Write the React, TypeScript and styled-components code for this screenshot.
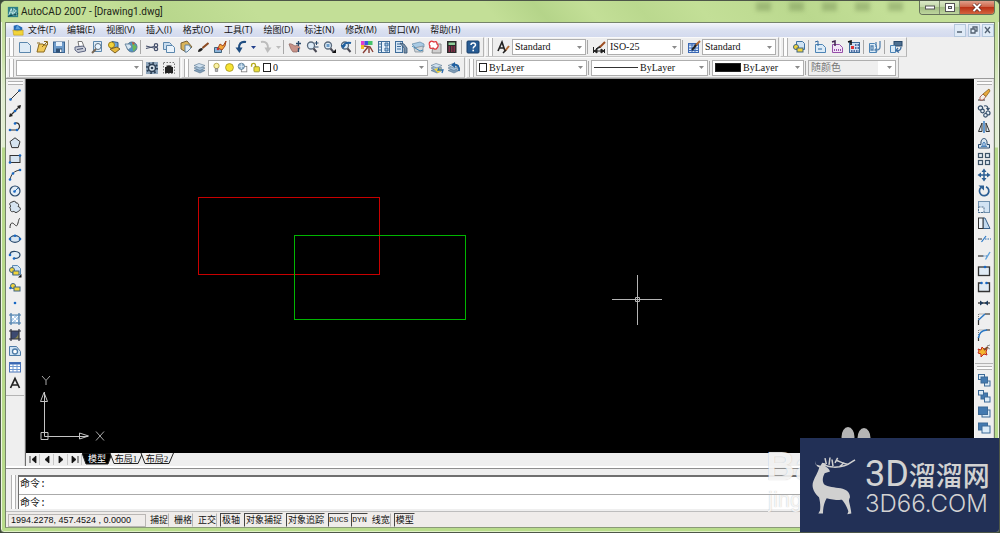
import React from "react";
import styled, { createGlobalStyle, css } from "styled-components";

const ui = `"Open Sans", "Noto Sans CJK SC", sans-serif`;
const song = `"Liberation Serif", "Noto Sans CJK SC", serif`;
const mono = `"Liberation Mono", "Noto Sans CJK SC", monospace`;

const Global = createGlobalStyle`
  * { box-sizing: border-box; }
  body { margin: 0; background: #3c4a38; font-family: ${ui}; color: #111; }
  button, input, select { font: inherit; color: inherit; margin: 0; padding: 0; border: 0; background: none; border-radius: 0; }
  svg { display: block; flex: none; }
`;

/* ---------- window frame ---------- */

const Frame = styled.div`
  position: relative;
  display: flex;
  flex-direction: column;
  min-height: 100vh;
  overflow: hidden;
  border: 1px solid #4d5648;
  border-radius: 6px 6px 4px 4px;
  padding: 0 5px 4px 5px;
  background: linear-gradient(#c3de99 0, #c9e2a4 50px, #e0ecd0 90px, #e2eed3 146px, #b7d98b 147px, #b9dc8c 100%);
  box-shadow: inset 1px 0 0 #eef6e2, inset -1px 0 0 #eef6e2, inset 0 -1px 0 #dff0c4;
`;

const TitleBar = styled.header`
  display: flex;
  align-items: flex-start;
  height: 21px;
  margin: 0 -5px;
  padding-left: 6px;
  background:
    linear-gradient(50deg, transparent 12%, #a9cb7d66 17%, transparent 26%, transparent 49%, #9fc47566 54%, transparent 59%, #a9cb7d55 64%, transparent 70%, #a9cb7d55 80%, transparent 88%),
    #c3df97;
`;

const Title = styled.h1`
  flex: 1;
  display: flex;
  align-items: center;
  gap: 2px;
  height: 21px;
  margin: 0;
  font: 400 10px/20px Roboto, ${ui};
  color: #1c2416;
`;

const Ghosts = styled.div`
  display: flex;
  gap: 18px;
  padding: 1px 16px 0 0;
  filter: blur(2px);
`;
const Ghost = styled.i`
  width: 15px;
  height: 9px;
  background: #5d764055;
`;

const CaptionGroup = styled.div`
  display: flex;
  margin-right: 4px;
  height: 14px;
  border: 1px solid #66725a;
  border-top: 0;
  border-radius: 0 0 4px 4px;
  overflow: hidden;
`;
const CaptionButton = styled.button<{ $close?: boolean }>`
  display: grid;
  place-items: center;
  width: ${(p) => (p.$close ? 34 : 20)}px;
  border-right: 1px solid #7f8c70;
  background: linear-gradient(#dbe9c8, #c3d8a8 45%, #a3bd84 50%, #bdd59d);
  ${(p) =>
    p.$close &&
    css`
      border-right: 0;
      background: linear-gradient(#e0a08c, #cf6448 45%, #bb3317 50%, #d3653f);
    `}
`;

const Client = styled.div`
  flex: 1;
  display: flex;
  flex-direction: column;
  border: 1px solid #75836a;
  border-bottom-color: #8a9a78;
  margin: 0 -1px;
  background: #efefef;
`;

const MenuBar = styled.nav`
  display: flex;
  align-items: center;
  height: 14px;
  padding-left: 6px;
  background: linear-gradient(#f4f6fb, #dbe1f1 50%, #d3daee);
`;
const MenuItems = styled.div`
  flex: 1;
  display: flex;
  gap: 11px;
  padding-left: 4px;
`;
const MenuButton = styled.button`
  font: 9px/14px ${ui};
  white-space: nowrap;
`;
const MdiButtons = styled.div`
  display: flex;
  gap: 2px;
`;
const MdiButton = styled.button`
  display: grid;
  place-items: center;
  width: 12px;
  height: 13px;
  border: 1px solid #b4c7dc;
  background: #e0ebf7;
`;

/* ---------- toolbars ---------- */

const ToolRow = styled.div<{ $h: number }>`
  display: flex;
  height: ${(p) => p.$h}px;
`;
const Bar = styled.div`
  display: flex;
  align-items: center;
  padding: 0 2px;
  border: 1px solid #fafafa;
  border-width: 1px 0 0 1px;
  border-right: 1px solid #b4b4b4;
  border-bottom: 1px solid #c4c4c4;
  margin-right: 1px;
`;
const Grip = styled.i<{ $across?: boolean }>`
  flex: none;
  ${(p) =>
    p.$across
      ? css`
          width: 15px;
          height: 4px;
          margin: 2px 0;
          border-width: 1px 0;
        `
      : css`
          width: 5px;
          height: 18px;
          margin-right: 2px;
          border-width: 0 1px;
        `}
  border-style: solid;
  border-color: #b2b2b2;
  background: #fdfdfd;
`;
const Split = styled.i`
  flex: none;
  width: 1px;
  height: 14px;
  margin: 0 2px 0 1px;
  background: #a8a8a8;
`;
const ToolButton = styled.button<{ $w?: number; $h?: number }>`
  flex: none;
  display: grid;
  place-items: center;
  width: ${(p) => p.$w ?? 17}px;
  height: ${(p) => p.$h ?? 17}px;
`;
const Combo = styled.label<{ $w: number; $dim?: boolean }>`
  display: flex;
  align-items: center;
  gap: 2px;
  width: ${(p) => p.$w}px;
  height: 16px;
  padding: 0 3px 0 2px;
  border: 1px solid #aeaeae;
  background: ${(p) => (p.$dim ? "linear-gradient(90deg, #efefef 80%, #fff 80%)" : "#fff")};
  color: ${(p) => (p.$dim ? "#777" : "#111")};
  select {
    flex: 1;
    min-width: 0;
    height: 14px;
    appearance: none;
    outline: 0;
    font: 10px/14px ${song};
    opacity: 1;
  }
`;
const Swatch = styled.i<{ $w: number; $fill: string }>`
  flex: none;
  width: ${(p) => p.$w}px;
  height: 9px;
  border: 1px solid #222;
  background: ${(p) => p.$fill};
`;
const LineSample = styled.i`
  flex: none;
  width: 44px;
  height: 1px;
  background: #333;
`;

/* ---------- drawing area ---------- */

const Workspace = styled.main`
  flex: 1;
  display: flex;
  border-top: 1px solid #9a9a9a;
`;
const SideDock = styled.aside`
  flex: none;
  display: flex;
  flex-direction: column;
  width: 19px;
  border-right: 1px solid #d8d8d8;
`;
const SideBar = styled.div`
  display: flex;
  flex-direction: column;
  align-items: center;
  padding-bottom: 4px;
  border-bottom: 1px solid #b4b4b4;
`;
const Center = styled.section`
  flex: 1;
  min-width: 0;
  display: flex;
  flex-direction: column;
  border-left: 1px solid #6e6e6e;
  border-right: 1px solid #f8f8f8;
`;
const Canvas = styled.div`
  position: relative;
  flex: 1;
  background: #000;
  overflow: hidden;
`;
const Model = styled.svg`
  position: absolute;
  left: 0;
  top: 0;
`;
const Ucs = styled.svg`
  position: absolute;
  left: 11px;
  bottom: 8px;
`;
const LayoutTabs = styled.div`
  display: flex;
  align-items: center;
  height: 12px;
  margin-bottom: 3px;
`;
const TabNav = styled.button`
  display: grid;
  place-items: center;
  width: 14px;
  height: 11px;
  border-right: 1px solid #c8c8c8;
`;
const Tab = styled.button<{ $on?: boolean }>`
  position: relative;
  margin-left: ${(p) => (p.$on ? 0 : -3)}px;
  width: ${(p) => (p.$on ? 30 : 34)}px;
  height: 12px;
  svg {
    position: absolute;
    inset: 0;
  }
  span {
    position: relative;
    display: block;
    font: 9px/12px ${song};
    color: ${(p) => (p.$on ? "#fff" : "#111")};
    white-space: nowrap;
  }
`;

/* ---------- command line and status bar ---------- */

const CommandDock = styled.section`
  display: flex;
  border-top: 1px solid #8e8e8e;
  padding: 6px 0 2px 5px;
  box-shadow: 0 -2px 0 #fff;
`;
const CommandBox = styled.div`
  flex: 1;
  border: 1px solid #6f6f6f;
  border-width: 2px 0 0 1px;
  background: #fff;
  font: 10px/17px ${mono};
`;
const CommandGrip = styled.i`
  width: 5px;
  margin: 0 2px 0 0;
  border: solid #b2b2b2;
  border-width: 0 1px;
  background: #fdfdfd;
`;
const History = styled.div`
  height: 17px;
  padding-left: 1px;
  line-height: 15px;
`;
const Prompt = styled.label`
  display: flex;
  height: 15px;
  padding-left: 1px;
  border-top: 1px solid #aaa;
  line-height: 17px;
  input {
    flex: 1;
    outline: 0;
  }
`;
const StatusBar = styled.footer`
  display: flex;
  align-items: center;
  height: 16px;
  padding: 1px 2px 0 2px;
  border-top: 1px solid #bdbdbd;
  background: #efecea;
`;
const Coordinates = styled.output`
  width: 138px;
  height: 13px;
  margin-right: 2px;
  padding-left: 2px;
  border: 1px solid #b9b6b4;
  font: 9px/11px "Liberation Sans", sans-serif;
  white-space: pre;
`;
const Toggle = styled.button<{ $down?: boolean; $code?: boolean }>`
  height: 14px;
  margin-right: ${(p) => (p.$code ? 2 : 3)}px;
  padding: 0 0 0 ${(p) => (p.$code ? 0 : 1)}px;
  border: 1px solid;
  border-color: ${(p) => (p.$down ? "#444 #efecea #efecea #444" : "#efecea #b9b6b4 #efecea #efecea")};
  font: ${(p) => (p.$code ? `8px/12px ${mono}` : `9px/12px ${song}`)};
  white-space: nowrap;
`;

/* ---------- overlays ---------- */

const Paw = styled.svg`
  position: absolute;
  right: 125px;
  bottom: 86px;
`;
const BaiduMark = styled.div`
  position: absolute;
  right: 199px;
  bottom: 18px;
  width: 32px;
  font-family: "Liberation Sans", sans-serif;
  color: #ffffffd0;
  text-shadow: 0 0 1px #8888;
  pointer-events: none;
  white-space: nowrap;
  overflow: hidden;
  b {
    display: block;
    font-size: 40px;
    line-height: 40px;
    margin-left: -2px;
  }
  span {
    display: block;
    font-size: 22px;
    line-height: 28px;
  }
`;
const SiteBadge = styled.div`
  position: absolute;
  right: -1px;
  bottom: -1px;
  display: flex;
  align-items: center;
  gap: 8px;
  width: 200px;
  height: 95px;
  padding-left: 12px;
  background: #223056;
  color: #d2d2d2;
`;
const BadgeText = styled.div`
  display: flex;
  flex-direction: column;
  padding-top: 3px;
`;
const BadgeName = styled.strong`
  display: flex;
  align-items: center;
  height: 33px;
  font: 400 36px/33px Roboto, sans-serif;
  white-space: nowrap;
  span {
    font: 500 27px/33px "Noto Sans CJK SC", sans-serif;
  }
`;
const BadgeUrl = styled.span`
  font: 300 24px/26px Inter, sans-serif;
  white-space: nowrap;
`;

/* ---------- icons, each in a 14-unit box ---------- */

const B = "#2b6cb0";
const D = "#2a4a6c";
const K = "#333";
const Y = "#f2d43a";

const lens = (
  <>
    <circle cx="6" cy="5.5" r="3.5" fill="#dcebf7" stroke="#5a6a7c" strokeWidth="1.3" />
    <path d="M8.5 8.5l3 3.5" stroke="#4a4a55" strokeWidth="2" />
  </>
);
const layers = (
  <>
    <path d="M1 9.500l5-2 6 2-5 2.500z" fill="#7f9db8" stroke="#55738f" strokeWidth=".6" />
    <path d="M1 7l5-2 6 2-5 2.500z" fill="#a9c3da" stroke="#55738f" strokeWidth=".6" />
    <path d="M1 4.500l5-2 6 2-5 2.500z" fill="#cfe0ee" stroke="#55738f" strokeWidth=".6" />
  </>
);
const dot = (x: number, y: number) => <circle cx={x} cy={y} r="1.3" fill="#1768c4" />;
const blockShapes = (x: number, y: number) => (
  <g transform={`translate(${x} ${y})`}>
    <circle cx="3" cy="3" r="2.500" fill={Y} stroke="#3f6480" />
    <rect x="4" y="4" width="6" height="4" fill={Y} stroke="#3f6480" />
  </g>
);

const art: Record<string, React.ReactNode> = {
  app: (
    <>
      <rect x="1" y="1" width="12" height="12" fill="#2d7f86" />
      <path d="M2 11L5 3l2 8M3 8h3M8 3v8M8 3l3 3-3 2M11 11V8" stroke="#d7f4f2" fill="none" />
      <path d="M1 12l12-3" stroke="#0d3e48" />
    </>
  ),
  dwg: (
    <>
      <path d="M2 2l4-1 6 3v4H2z" fill="#2268b4" />
      <path d="M6 1l4 5H4z" fill="#5ca0dc" />
      <path d="M1 7l5 1 7-1v6H2z" fill={Y} stroke="#b38f1a" strokeWidth=".6" />
    </>
  ),
  new: <path d="M1.500 2.500h8l3 3v7h-11z" fill="#deebf6" stroke="#5b87ad" />,
  open: (
    <>
      <path d="M2 12l2-8h4l1 1h3l-3 7z" fill="#f0c95a" stroke="#8a6a20" />
      <path d="M7 7l5-5M9 1.500h3.500V5M2 3h3" stroke="#8a6a20" fill="none" />
    </>
  ),
  save: (
    <>
      <rect x="1.500" y="2" width="11" height="10.500" fill="#6f9ccb" stroke="#3c6591" />
      <rect x="4" y="2" width="6" height="4" fill="#e6f0fa" />
      <rect x="4" y="8.500" width="6" height="4" fill="#2f5075" />
      <rect x="8" y="9.500" width="1.500" height="2.500" fill="#fff" />
    </>
  ),
  print: (
    <>
      <path d="M5 1.500h4l2 5H6z" fill="#fff" stroke="#777" />
      <path d="M2 7l8-1 2.500 2v3L5 12.500 2 10z" fill="#c9cdd8" stroke="#5c6480" />
      <path d="M4 9.500l6-1" stroke="#465070" />
    </>
  ),
  preview: (
    <>
      <path d="M3.500 1.500h8v10h-8z" fill="#deebf6" stroke="#5b87ad" />
      <circle cx="8" cy="6.500" r="3" fill="#eaf5ff" stroke="#5a7085" />
      <path d="M6 9l-4 4" stroke="#765" strokeWidth="2" />
    </>
  ),
  publish: (
    <>
      <path d="M5 1.500l6 1v5l-6 1z" fill="#6ca3d4" stroke="#385f85" />
      <circle cx="4.500" cy="5" r="3" fill={Y} stroke="#9a7a18" />
      <path d="M3 9l7-2 3 2-5 4z" fill="#e6b83d" stroke="#7a6124" />
    </>
  ),
  globe: (
    <>
      <circle cx="8" cy="7" r="5" fill="#4e93c9" stroke="#5a7990" />
      <path d="M8 3c3 0 3 3 5 4-2 2-2 4-4 4z" fill="#6cb858" />
      <path d="M1 4h5l2 3-4 3z" fill="#d7e6f2" stroke="#6b87a0" />
      <path d="M8 2l3 1-2 2z" fill="#d05038" />
    </>
  ),
  cut: (
    <g fill="none" stroke="#45506b" strokeWidth="1.200">
      <path d="M1 6l8 2M1 8.500l8-2" />
      <circle cx="11" cy="5.300" r="1.700" />
      <circle cx="11" cy="9" r="1.700" />
    </g>
  ),
  copyclip: (
    <>
      <path d="M1.500 2.500h6l2 2v5h-8z" fill="#c8dcee" stroke="#5b87ad" />
      <path d="M4.500 5.500h6l2 2v5h-8z" fill="#eaf3fb" stroke="#5b87ad" />
    </>
  ),
  paste: (
    <>
      <path d="M2 3l6-2 5 6-6 5-5-3z" fill="#d9b45a" stroke="#7a6236" />
      <path d="M6 5h4l2 3-4 4H6z" fill="#dfedf8" stroke="#6283a0" />
    </>
  ),
  match: (
    <>
      <path d="M2 12c0-3 2-4 4-4l1 1c-1 2-3 3-5 3z" fill="#222" />
      <path d="M6.500 8l6-5" stroke="#8b4a22" strokeWidth="2.200" />
    </>
  ),
  bedit: (
    <>
      <path d="M1.500 7.500h7v5h-7z" fill="#8bb4da" stroke="#3f6480" />
      <path d="M5 8l2-4 3 2 3-5-1 5-3 4-2-1z" fill="#f3a73a" stroke="#a4471e" />
      <circle cx="5" cy="9" r="1.300" fill="#c5302a" />
    </>
  ),
  undo: (
    <>
      <path d="M12 2C7 1 4.500 4 5 9" fill="none" stroke="#1f4d80" strokeWidth="2.200" />
      <path d="M1.500 7.500h7L5.500 13z" fill="#1f4d80" />
    </>
  ),
  redo: (
    <>
      <path d="M2 2c5-1 7.500 2 7 7" fill="none" stroke="#bcbcbc" strokeWidth="2" />
      <path d="M5.500 7.500h7L8.500 13z" fill="#bcbcbc" />
    </>
  ),
  pan: (
    <>
      <path d="M1 4c2-1 4 1 6 2l3-1 2 3-3 4H5C3 10 2 7 1 4z" fill="#c79288" stroke="#8b625c" strokeWidth=".7" />
      <path d="M10.500 1v5M8 3.500h5M10.500 8v4" stroke={D} strokeWidth="1.300" />
    </>
  ),
  zoomrt: (
    <>
      {lens}
      <path d="M9.500 3h4M11.500 1v4M9.500 7h4" stroke={D} />
    </>
  ),
  zoomwin: (
    <>
      {lens}
      <rect x="4.500" y="4" width="3" height="3" fill="#6a9cc9" />
      <path d="M10 13h4v-4z" fill="#111" />
    </>
  ),
  zoomprev: (
    <>
      {lens}
      <path d="M4 7c1-4 4-5 8-4" fill="none" stroke="#1f5f9f" strokeWidth="2" />
      <path d="M2 5l5 0-3 4z" fill="#1f5f9f" />
    </>
  ),
  props: (
    <>
      <rect x="1" y="1" width="3.500" height="4" fill="#e33bd0" />
      <rect x="4.500" y="1" width="3.500" height="4" fill="#3a54e0" />
      <rect x="8" y="1" width="4.500" height="4" fill="#45c36b" />
      <path d="M1 5h3v4H1z" fill="#f3bd28" />
      <path d="M4 6l6 1 3 5M8 7L3 13M9 8v5" stroke="#8a4038" strokeWidth="1.400" fill="none" />
    </>
  ),
  dcenter: (
    <>
      <rect x="1.500" y="1.500" width="11" height="11" fill="#e5f0fa" stroke="#3f6d9a" />
      <path d="M4.500 2v10M8 3h3v3H8zM8 8h3v3H8zM2 4h2M2 7h2M2 10h2" stroke="#3f6d9a" fill="#9cc2e4" />
    </>
  ),
  palette: (
    <>
      <rect x="1.500" y="1.500" width="7" height="11" fill="#d5e6f5" stroke="#3f6d9a" />
      <path d="M3 4h4M3 6.500h4M3 9h4" stroke="#3f6d9a" />
      <path d="M6 3l4 1 3 4v5h-3V8z" fill="#7a92aa" stroke="#33506e" strokeWidth=".8" />
    </>
  ),
  sheet: (
    <>
      <path d="M1 4l8-2 4 2v3L5 8z" fill="#a9cbe4" stroke="#6289a9" strokeWidth=".7" />
      <path d="M3 8l9-2v6H4z" fill="#d1d5d8" stroke="#7a8893" strokeWidth=".7" />
      <path d="M1 6l8 5 3-1" stroke="#3f86b5" fill="none" />
    </>
  ),
  markup: (
    <>
      <path d="M5 4h8v9H4z" fill="#d0d0d0" stroke="#8a8a8a" />
      <path d="M2 2c2-2 3 0 4 0 2-1 3 0 3 2 2 1 1 3 0 4-1 2-3 1-4 0-2 1-4 0-3-2-1-1-1-3 0-4z" fill="#fff" stroke="#e0363c" strokeWidth="1.300" />
    </>
  ),
  calc: (
    <>
      <rect x="2" y="1" width="9.500" height="12" fill="#2b2b2b" />
      <rect x="3.500" y="2.500" width="6.500" height="2.500" fill="#8fcf9b" />
      <path d="M3.500 7h7M3.500 9h7M3.500 11h7" stroke="#d36" strokeDasharray="1.500 1" />
    </>
  ),
  help: (
    <>
      <rect x="1" y="1" width="12" height="12" rx="1" fill="#285c94" stroke="#173f6b" />
      <path d="M5 5c0-3 4.500-2.500 4.500 0 0 1.500-2.300 1.500-2.300 3.500" stroke="#fff" fill="none" strokeWidth="1.500" />
      <rect x="6.400" y="9.700" width="1.600" height="1.600" fill="#fff" />
    </>
  ),
  textstyle: (
    <>
      <path d="M1 11L5 2l3 9M2.500 8h5" stroke="#222" fill="none" strokeWidth="1.600" />
      <path d="M8 11l4-5" stroke="#b06a34" strokeWidth="2" />
      <path d="M6 13l3-3" stroke="#222" strokeWidth="1.600" />
    </>
  ),
  dimstyle: (
    <>
      <path d="M1.500 7v6M12.500 9v4M2 11h10" stroke="#222" />
      <path d="M2 11l3-2v4zM12 11l-3-2v4zM4 9l4-3 1 1z" fill="#222" stroke="#222" />
      <path d="M8 7l5-5" stroke="#9c4d22" strokeWidth="2" />
    </>
  ),
  tablestyle: (
    <>
      <rect x="1.500" y="3.500" width="10" height="9" fill="#dbe9f8" stroke="#3a68b5" />
      <path d="M2 5h9M2 8h9M2 10.500h9M5 4v8M8 4v8" stroke="#3a68b5" />
      <path d="M5 10l5-6" stroke="#222" strokeWidth="2" />
      <path d="M9 5l4-4" stroke="#b06a34" strokeWidth="2" />
    </>
  ),
  refedit: (
    <>
      <path d="M4.500 1.500h6l2 2v6h-8z" fill="#cfe3f4" stroke="#3f74a4" />
      {blockShapes(1, 4)}
    </>
  ),
  p1: (
    <>
      <path d="M2.500 4.500h7l3 3v5h-10z" fill="#dcebf7" stroke="#4d84b5" />
      <path d="M2 2l3-1v5M5 9h4" stroke="#2f66a0" fill="none" />
    </>
  ),
  p2: (
    <>
      <path d="M2.500 4.500h7l3 3v5h-10z" fill="#f2e4f7" stroke="#9650a8" />
      <path d="M2 2l3-1v5" stroke="#402050" fill="none" strokeWidth="1.500" />
      <path d="M4 10h8" stroke="#9650a8" strokeDasharray="1 1" strokeWidth="2" />
    </>
  ),
  p3: (
    <>
      <rect x="2.500" y="2.500" width="10" height="10" fill="#cfe0f2" stroke="#3d6b98" />
      <path d="M1 2l3-1v4" stroke="#111" fill="none" strokeWidth="1.600" />
      <path d="M4 6h3v3H4z" fill="#d33" />
      <path d="M8 5h4M8 8h4M4 11h8" stroke="#2a4a8c" strokeDasharray="1.500 1" strokeWidth="1.500" />
    </>
  ),
  p4: (
    <>
      <path d="M1.500 3.500h5l2 2v7h-7z" fill="#dcebf7" stroke="#4d84b5" />
      <path d="M8 2v5M12 1v6c0 2-2 3-4 3M9 8l-2 2 2 2M3 6h2v4H3z" stroke="#5684b0" fill="none" strokeWidth="1.300" />
    </>
  ),
  p5: (
    <>
      <rect x="5" y="1.500" width="8" height="4.500" fill="#4d6f90" stroke="#29496a" />
      <path d="M1.500 5.500h4l1 1v6h-5z" fill="#dcebf7" stroke="#4d84b5" />
      <path d="M12 7c0 3-2 4-4 3.500M9 8l-2 2.500 3 2" stroke="#3b6ca0" fill="none" strokeWidth="1.300" />
    </>
  ),
  gear: (
    <>
      <rect x="1" y="1" width="12" height="12" fill="#8ea5bb" />
      <circle cx="7" cy="7" r="3.500" fill="#dce6ef" stroke="#2c3f54" strokeWidth="1.500" />
      <circle cx="7" cy="7" r="5" fill="none" stroke="#2c3f54" strokeWidth="2" strokeDasharray="1.600 2.300" />
      <circle cx="7" cy="7" r="1.300" fill="#2c3f54" />
    </>
  ),
  house: (
    <>
      <rect x="1.500" y="1.500" width="11" height="11" fill="none" stroke="#777" strokeDasharray="1.500 1.500" />
      <path d="M3 6h1.500V4.500h2L7 4l.5.500h2V6H11v6H3z" fill="#222" />
    </>
  ),
  layers,
  layercur: (
    <>
      {layers}
      <path d="M4 8l5-1 4 2-5 3z" fill={Y} />
      <path d="M9 7l-1 2h5l-1 3" stroke="#2b6cb0" fill="none" strokeWidth="1.300" />
    </>
  ),
  layerprev: (
    <>
      {layers}
      <path d="M12 10c1-4-2-7-5-6" fill="none" stroke="#1f5f9f" strokeWidth="1.800" />
      <path d="M8 1v6L4 4z" fill="#1f5f9f" />
    </>
  ),
  bulb: (
    <>
      <circle cx="7" cy="5" r="3.400" fill="#fbf3a4" stroke="#a79534" />
      <path d="M5.500 8.500h3v3.500h-3z" fill="#bbb" stroke="#666" strokeWidth=".8" />
    </>
  ),
  sun: <circle cx="7" cy="7" r="5" fill="#f6e232" stroke="#a0901c" />,
  freeze: (
    <>
      <rect x="5.500" y="5.500" width="7" height="7" fill="#fff" stroke="#777" />
      <circle cx="5.500" cy="5.500" r="4" fill="#8fb2d0" stroke="#52758f" />
      <path d="M5.500 2v7M2 5.500h7" stroke="#e7f3fb" />
    </>
  ),
  lock: (
    <>
      <path d="M2 6V4c0-3 5-3 5 0v3" fill="none" stroke="#b5ab20" strokeWidth="1.800" />
      <rect x="5" y="6" width="7" height="6.500" rx="1" fill="#e9dd3a" stroke="#8a8420" />
    </>
  ),
  line: (
    <>
      <path d="M2 12L12 2" stroke={K} />
      {dot(2.5, 11.5)}
      {dot(11.5, 2.5)}
    </>
  ),
  xline: (
    <>
      <path d="M2 12L12 2" stroke={K} strokeWidth="1.200" />
      <path d="M1 13l1-4 3 3zM13 1l-1 4-3-3z" fill="#222" />
      {dot(7, 7)}
    </>
  ),
  pline: (
    <>
      <path d="M2 10h8M7 3c5-1 6 5 2 7" stroke={K} fill="none" strokeWidth="1.200" />
      {dot(2, 10)}
      {dot(9, 10)}
      {dot(7, 3.5)}
    </>
  ),
  polygon: <path d="M7 1.800l5 3.800-1.800 6H3.800L2 5.600z" fill="#d6e4f0" stroke={K} />,
  rect: (
    <>
      <rect x="2" y="3.500" width="10" height="7" fill="#d6e4f0" stroke={K} />
      {dot(2, 10.500)}
      {dot(12, 3.500)}
    </>
  ),
  arc: (
    <>
      <path d="M2 12C3 6 6 3 12 2" stroke={K} fill="none" />
      {dot(2, 11.500)}
      {dot(5, 5.500)}
      {dot(12, 2)}
    </>
  ),
  circle: (
    <>
      <circle cx="7" cy="7" r="5" fill="#e2edf6" stroke={D} strokeWidth="1.200" />
      <path d="M7 7l3-3" stroke={B} />
      {dot(6.500, 7.500)}
    </>
  ),
  cloud: (
    <path
      d="M3 6C1 5 1.500 2 4 2.200 5 .8 8 1 8.200 3 11 3 11 5.500 10 6.500c3 .5 3 4 .5 4.500C9.500 13 6.500 13 6 11.200 4 12.500 1.500 11 2.800 9 1.500 8.500 1.500 7 3 6z"
      fill="#d6e4f0"
      stroke={K}
    />
  ),
  spline: <path d="M2 12c0-5 2-6 4-4s3 3 4-1 1-4 2-5" fill="none" stroke={K} />,
  ellipse: (
    <>
      <ellipse cx="7" cy="7" rx="5" ry="3.300" fill="#d6e4f0" stroke={D} strokeWidth="1.200" />
      {dot(2, 7)}
      {dot(12, 7)}
      {dot(7, 3.700)}
    </>
  ),
  ellarc: (
    <>
      <path d="M2 6c1-4 10-3 10 1 0 3-4 4-6 3" fill="#e2edf6" stroke={D} strokeWidth="1.200" />
      {dot(2, 7)}
      {dot(6, 10.500)}
    </>
  ),
  insert: (
    <>
      <path d="M4.500 1.500h5l3 3v6h-8z" fill="#cfe3f4" stroke="#5b8ab5" />
      {blockShapes(1, 3)}
      <path d="M10 13.500h3.500V10z" fill="#111" />
    </>
  ),
  block: (
    <>
      {blockShapes(2, 3)}
      {dot(2.5, 8)}
    </>
  ),
  point: <circle cx="7" cy="7" r="1.300" fill="#1768c4" />,
  hatch: (
    <>
      <rect x="3" y="3" width="8" height="8" fill="#b8d2ea" />
      <path d="M3 7l4-4M3 11l8-8M7 11l4-4M3 3l8 8" stroke="#fff" />
      <path d="M3 1v12M11 1v12M1 3h12M1 11h12" stroke="#4378a8" strokeWidth="1.200" />
    </>
  ),
  gradient: (
    <>
      <rect x="3" y="3" width="8" height="8" fill="#3c4a70" />
      <path d="M4 11c4 0 6-3 7-7v7z" fill="#8b8a50" />
      <path d="M3 1v12M11 1v12M1 3h12M1 11h12" stroke="#2a2f3c" strokeWidth="1.200" />
    </>
  ),
  region: (
    <>
      <path d="M1.500 11.500v-9h7l4 5v4z" fill="#cfe3f4" stroke="#4d7ba6" />
      <circle cx="7" cy="7.500" r="2.500" fill="#fff" stroke="#4d7ba6" strokeWidth="1.300" />
    </>
  ),
  table: (
    <>
      <rect x="1.500" y="2.500" width="11" height="9.500" fill="#fff" stroke="#4a74b8" />
      <path d="M2 3.500h10" stroke="#3a68b5" strokeWidth="2" />
      <path d="M2 6.500h10M2 9.500h10M5 4v8M9 4v8" stroke="#6f97d0" />
    </>
  ),
  mtext: <path d="M2.500 12L7 2.500 11.500 12M4.200 9h5.600" fill="none" stroke="#222" strokeWidth="1.700" />,
  erase: (
    <>
      <path d="M1 12h7" stroke="#333" />
      <path d="M3 9l3-3 3 2.500L6 12H3z" fill="#f4f0ea" stroke="#a04a3a" strokeWidth=".8" />
      <path d="M6 6l6-5 1 2-4 5.500z" fill="#e9a93c" stroke="#8a6424" strokeWidth=".8" />
    </>
  ),
  copyobj: (
    <g fill="#e4edf5" stroke="#37506b" strokeWidth="1.200">
      <circle cx="3.500" cy="4" r="2.200" />
      <circle cx="5.500" cy="7" r="1.800" />
      <circle cx="11" cy="9" r="2" />
      <circle cx="8.500" cy="11.300" r="1.800" />
      <path d="M7 2c3-1 4 1 4 3M9.500 4l1.500 2 1.500-2" fill="none" />
    </g>
  ),
  mirror: (
    <>
      <path d="M5 3v8.500H1.500zM9 3v8.500h3.500z" fill="#d6e4f0" stroke={K} />
      <path d="M7 1v12" stroke="#2b78c5" strokeWidth="1.400" />
    </>
  ),
  offset: (
    <g fill="none" stroke={D}>
      <path d="M1.500 12h11V8.500H10c1-8-7-8-6 0H1.500z" fill="#d6e4f0" />
      <path d="M4 10.300h6M6 10c-1-5 3-5 2 0" stroke={B} />
    </g>
  ),
  array: (
    <g fill="#e4edf5" stroke="#3e5468" strokeWidth="1.200">
      <rect x="1.500" y="1.500" width="4" height="4" />
      <rect x="8.500" y="1.500" width="4" height="4" />
      <rect x="1.500" y="8.500" width="4" height="4" />
      <rect x="8.500" y="8.500" width="4" height="4" />
    </g>
  ),
  move: (
    <>
      <path d="M7 2v10M2 7h10" stroke="#2c5f94" strokeWidth="1.500" />
      <path d="M7 .5L9.500 4h-5zM7 13.500L4.500 10h5zM.5 7L4 4.500v5zM13.500 7L10 9.500v-5z" fill="#2c5f94" />
    </>
  ),
  rotate: (
    <>
      <path d="M4 3.500a4.700 4.700 0 1 0 5-.8" fill="none" stroke="#2c5f94" strokeWidth="1.700" />
      <path d="M1.500 1.500h5.500v5z" fill="#2c5f94" />
    </>
  ),
  scale: (
    <>
      <rect x="1.500" y="1.500" width="11" height="11" fill="#d2e3f3" stroke="#7191ae" />
      <rect x="1.500" y="7" width="5.500" height="5.500" fill="#eef4fa" stroke="#4c6d8c" strokeDasharray="2 1" />
    </>
  ),
  stretch: (
    <>
      <path d="M6 2l2 0 5 10.500H6z" fill="#c2d9ee" stroke="#37618c" />
      <rect x="1.500" y="2" width="4.500" height="10.500" fill="#eef4fa" stroke={K} />
    </>
  ),
  trim: (
    <>
      <path d="M1 7h4" stroke={K} strokeWidth="1.200" />
      <path d="M8 7h6" stroke={B} strokeDasharray="1.500 1" />
      <path d="M4.500 10L9 4" stroke="#2b78c5" strokeWidth="1.200" />
    </>
  ),
  extend: (
    <>
      <path d="M1 8h5" stroke={K} strokeWidth="1.200" />
      <path d="M6 8h4" stroke={B} strokeDasharray="1.500 1" />
      <path d="M8.500 11.500L13 4" stroke="#5fa2dc" strokeWidth="1.400" />
    </>
  ),
  breakpt: (
    <>
      <rect x="1.500" y="3" width="11" height="8.500" fill="#e0ebf5" stroke={K} strokeWidth="1.300" />
      {dot(8, 3)}
    </>
  ),
  break: (
    <>
      <path d="M4.500 3h-3v8.500h11V3h-3" fill="#e0ebf5" stroke={K} strokeWidth="1.300" />
      {dot(4.500, 3)}
      {dot(9.500, 3)}
    </>
  ),
  join: (
    <>
      <path d="M1 7h12" stroke="#222" strokeWidth="1.200" />
      <path d="M3 4.500L6.500 7 3 9.500zM11 4.500L7.500 7l3.500 2.500z" fill="#1d3b5c" />
    </>
  ),
  chamfer: (
    <>
      <path d="M1.500 13V2h11.500" fill="none" stroke="#777" strokeDasharray="1 1" />
      <path d="M1.500 13V8M8 2h5" fill="none" stroke={K} strokeWidth="1.200" />
      <path d="M1.500 8L8 2" stroke="#2b78c5" strokeWidth="1.400" />
    </>
  ),
  fillet: (
    <>
      <path d="M1.500 13V2h11.500" fill="none" stroke="#777" strokeDasharray="1 1" />
      <path d="M1.500 13V9M9 2h4" stroke={K} strokeWidth="1.200" />
      <path d="M1.500 10C2 5 4 2.500 10 2" fill="none" stroke="#2b78c5" strokeWidth="1.700" />
    </>
  ),
  explode: (
    <>
      <path d="M1 5l3 1 1-3 2 2 3 0-1 3 1 3-3-1-3 3v-3l-3-1 1-2z" fill="#f4b52e" stroke="#c0281e" />
      <path d="M7 6l4-3" stroke="#7c4a2a" strokeWidth="2" />
      <path d="M10 2l3-1M11 4l2 1" stroke="#888" />
    </>
  ),
  front: (
    <g stroke="#3c6a97">
      <rect x="1.500" y="1.500" width="6" height="5" fill="#dcebf7" />
      <rect x="7.500" y="8" width="5.500" height="5" fill="#dcebf7" />
      <rect x="4" y="4" width="6.500" height="6" fill="#447ab0" />
    </g>
  ),
  back: (
    <g stroke="#3c6a97">
      <rect x="4" y="4" width="6.500" height="6" fill="#447ab0" />
      <rect x="1.500" y="1.500" width="5" height="4.500" fill="#dcebf7" />
      <rect x="7.500" y="8" width="5.500" height="5" fill="#dcebf7" />
    </g>
  ),
  above: (
    <g stroke="#3c6a97">
      <rect x="5" y="5" width="8" height="7" fill="#dcebf7" />
      <rect x="1.500" y="2" width="9" height="7.500" fill="#447ab0" />
    </g>
  ),
  under: (
    <g stroke="#3c6a97">
      <rect x="1.500" y="2" width="9" height="7" fill="#447ab0" />
      <rect x="5" y="5" width="8" height="7" fill="#dcebf7" />
    </g>
  ),
};

const Icon = ({ name, size = 14 }: { name: string; size?: number }) => (
  <svg width={size} height={size} viewBox="0 0 14 14" fill="none" aria-hidden="true">
    {art[name]}
  </svg>
);

const Caret = ({ color = "#8a8a8a" }: { color?: string }) => (
  <svg width="5" height="3" viewBox="0 0 5 3" aria-hidden="true">
    <path d="M0 0h5L2.500 3z" fill={color} />
  </svg>
);

/* "|" is a divider, "v" a small drop arrow, anything else an icon */
const Tools = ({ names }: { names: string[] }) => (
  <>
    {names.map((n, i) =>
      n === "|" ? (
        <Split key={i} />
      ) : n[0] === "v" ? (
        <ToolButton key={i} $w={8} aria-label="history">
          <Caret color={n === "v" ? "#23408c" : "#bbb"} />
        </ToolButton>
      ) : (
        <ToolButton key={i} aria-label={n}>
          <Icon name={n} />
        </ToolButton>
      )
    )}
  </>
);

const Pick = ({ w, label, value, dim, children }: { w: number; label: string; value: string; dim?: boolean; children?: React.ReactNode }) => (
  <Combo $w={w} $dim={dim}>
    {children}
    <select aria-label={label} defaultValue={value}>
      <option value={value}>{value}</option>
    </select>
    <Caret />
  </Combo>
);

const SideTools = ({ names }: { names: string[] }) => (
  <SideBar>
    <Grip $across />
    {names.map((n) => (
      <ToolButton key={n} $h={16} aria-label={n}>
        <Icon name={n} />
      </ToolButton>
    ))}
  </SideBar>
);

const menus = ["文件(F)", "编辑(E)", "视图(V)", "插入(I)", "格式(O)", "工具(T)", "绘图(D)", "标注(N)", "修改(M)", "窗口(W)", "帮助(H)"];
const standard = "new open save | print preview publish globe | cut copyclip paste match bedit | undo v redo v2 | pan zoomrt zoomwin zoomprev | props dcenter palette sheet markup calc | help".split(" ");
const draw = "line xline pline polygon rect arc circle cloud spline ellipse ellarc insert block point hatch gradient region table mtext".split(" ");
const modify = "erase copyobj mirror offset array move rotate scale stretch trim extend breakpt break join chamfer fillet explode".split(" ");
const toggles: { t: string; down?: boolean; code?: boolean }[] = [
  { t: "捕捉" },
  { t: "栅格" },
  { t: "正交" },
  { t: "极轴", down: true },
  { t: "对象捕捉", down: true },
  { t: "对象追踪", down: true },
  { t: "DUCS", down: true, code: true },
  { t: "DYN", down: true, code: true },
  { t: "线宽" },
  { t: "模型", down: true },
];
const navPaths = ["M3 1v7M9 1L5 4.500 9 8z", "M8 1L4 4.500 8 8z", "M4 1l4 3.500L4 8z", "M3 1l4 3.500L3 8zM9 1v7"];

export default function App() {
  return (
    <Frame>
      <Global />
      <TitleBar>
        <Title>
          <Icon name="app" size={12} />
          AutoCAD 2007 - [Drawing1.dwg]
        </Title>
        <Ghosts aria-hidden="true">
          <Ghost />
          <Ghost />
          <Ghost />
          <Ghost />
          <Ghost />
        </Ghosts>
        <CaptionGroup>
          <CaptionButton aria-label="minimize">
            <svg width="10" height="5" viewBox="0 0 10 5">
              <rect x=".5" y="1" width="9" height="3" fill="#fff" stroke="#555" />
            </svg>
          </CaptionButton>
          <CaptionButton aria-label="restore">
            <svg width="10" height="9" viewBox="0 0 10 9">
              <rect x=".5" y=".5" width="9" height="8" fill="#fff" stroke="#555" />
              <rect x="3.500" y="3.500" width="3" height="2" fill="#cde" stroke="#555" />
            </svg>
          </CaptionButton>
          <CaptionButton $close aria-label="close">
            <svg width="10" height="9" viewBox="0 0 10 9">
              <path d="M1.500 1l7 7M8.500 1l-7 7" stroke="#5a2a22" strokeWidth="3.400" />
              <path d="M1.500 1l7 7M8.500 1l-7 7" stroke="#fff" strokeWidth="2" />
            </svg>
          </CaptionButton>
        </CaptionGroup>
      </TitleBar>
      <Client>
        <MenuBar>
          <Icon name="dwg" size={12} />
          <MenuItems>
            {menus.map((m) => (
              <MenuButton key={m}>{m}</MenuButton>
            ))}
          </MenuItems>
          <MdiButtons>
            {["M1 6h5", "M1 3h4v4H1zM3 3V1h4v4H5", "M1 1l5 6M6 1L1 7"].map((d) => (
              <MdiButton key={d} aria-label="document window">
                <svg width="8" height="8" viewBox="0 0 8 8">
                  <path d={d} fill="none" stroke="#536272" strokeWidth="1.300" />
                </svg>
              </MdiButton>
            ))}
          </MdiButtons>
        </MenuBar>
        <ToolRow $h={20}>
          <Bar>
            <Grip />
            <Tools names={standard} />
          </Bar>
          <Bar>
            <Grip />
            <Tools names={["textstyle"]} />
            <Pick w={74} label="Text style" value="Standard" />
            <Tools names={["|", "dimstyle"]} />
            <Pick w={74} label="Dimension style" value="ISO-25" />
            <Tools names={["|", "tablestyle"]} />
            <Pick w={74} label="Table style" value="Standard" />
          </Bar>
          <Bar>
            <Grip />
            <Tools names={["refedit", "|", "p1", "p2", "p3", "|", "p4", "|", "p5"]} />
          </Bar>
        </ToolRow>
        <ToolRow $h={21}>
          <Bar>
            <Grip />
            <Pick w={127} label="Workspace" value="" />
            <Tools names={["gear", "house"]} />
          </Bar>
          <Bar>
            <Grip />
            <Tools names={["layers"]} />
            <Pick w={220} label="Layer" value="0">
              {["bulb", "sun", "freeze", "lock"].map((n) => (
                <Icon key={n} name={n} size={11} />
              ))}
              <Swatch $w={8} $fill="#fff" />
            </Pick>
            <Tools names={["layercur", "layerprev"]} />
          </Bar>
          <Bar>
            <Grip />
            <Pick w={111} label="Color" value="ByLayer">
              <Swatch $w={8} $fill="#fff" />
            </Pick>
            <Split />
            <Pick w={117} label="Linetype" value="ByLayer">
              <LineSample />
            </Pick>
            <Split />
            <Pick w={92} label="Lineweight" value="ByLayer">
              <Swatch $w={26} $fill="#000" />
            </Pick>
            <Split />
            <Pick w={88} label="Plot style" value="随颜色" dim />
          </Bar>
        </ToolRow>
        <Workspace>
          <SideDock>
            <SideTools names={draw} />
          </SideDock>
          <Center>
            <Canvas>
              <Model width="948" height="374" viewBox="26 79 948 374" fill="none">
                <rect x="198.500" y="197.500" width="181" height="77" stroke="#c80000" />
                <rect x="294.500" y="235.500" width="171" height="84" stroke="#00b400" />
                <path d="M612 299.500h50M637.500 275v50M635.500 297.500h4v4h-4z" stroke="#b4b4b4" />
              </Model>
              <Ucs width="70" height="72" viewBox="38 373 70 72" fill="none" stroke="#c4c4c4">
                <path d="M45.500 436.500V392M45.500 436.500H89M42 432.500h7v7h-7zM41.500 401.500l3.500-9 3.500 9zM80.500 433l9 3-9 3z" />
                <path d="M43 376l4 4.500V385M51 376l-4 4.500M97 431.500l8 9M105 431.500l-8 9" stroke="#a8a8a8" />
              </Ucs>
            </Canvas>
            <LayoutTabs>
              {navPaths.map((d) => (
                <TabNav key={d} aria-label="scroll tabs">
                  <svg width="12" height="9" viewBox="0 0 12 9">
                    <path d={d} fill="#111" stroke="#111" strokeWidth=".8" />
                  </svg>
                </TabNav>
              ))}
              {["模型", "布局1", "布局2"].map((t, i) => (
                <Tab key={t} $on={i === 0}>
                  <svg width={i ? 34 : 30} height="12" viewBox={`0 0 ${i ? 34 : 30} 12`}>
                    <path d={i ? "M1 0l4 10.500h24L33.500 0" : "M0 0l4 11h22l4-11z"} fill={i ? "#efefef" : "#000"} stroke="#222" />
                  </svg>
                  <span>{t}</span>
                </Tab>
              ))}
            </LayoutTabs>
          </Center>
          <SideDock>
            <SideTools names={modify} />
            <SideTools names={["front", "back", "above", "under"]} />
          </SideDock>
        </Workspace>
        <CommandDock>
          <CommandGrip />
          <CommandBox>
            <History>命令:</History>
            <Prompt>
              命令:
              <input aria-label="command" />
            </Prompt>
          </CommandBox>
        </CommandDock>
        <StatusBar>
          <Coordinates>1994.2278, 457.4524 , 0.0000</Coordinates>
          {toggles.map((b) => (
            <Toggle key={b.t} $down={b.down} $code={b.code} aria-pressed={!!b.down}>
              {b.t}
            </Toggle>
          ))}
        </StatusBar>
      </Client>
      <Paw width="34" height="20" viewBox="0 0 34 20" aria-hidden="true">
        <ellipse cx="8" cy="11" rx="6.500" ry="10" fill="#b4b4b4" />
        <ellipse cx="24" cy="12" rx="6.500" ry="10" fill="#b4b4b4" />
      </Paw>
      <BaiduMark aria-hidden="true">
        <b>Ba</b>
        <span>jing</span>
      </BaiduMark>
      <SiteBadge>
        <svg width="45" height="59" viewBox="215 138 135 176" fill="#d0d0d0">
          <path d="M225 162l15 5 6-9 10 2v10c7 3 11 8 13 14l-16 5c-6 11-8 24-2 33 12 9 32 9 50 12 17 3 28 12 28 27-3 5-4 10-2 17 3 12 5 22 6 32l-12 2 3-8c-3-12-11-26-19-35-15 1-32-1-46-5-8 14-11 28-11 46h-14l5-9c2-14 0-28-3-40-14-12-24-30-17-48 5-14 14-26 18-41-7-2-12-8-12-20z" />
          <path d="M250 162c16 12 44 10 62 5 14-4 22-11 32-18M258 162l-4-18M266 164l3-22M278 168l-3-20M284 158l8-15M298 169l14-12M322 162c-14-1-22-7-32-11" fill="none" stroke="#d0d0d0" strokeWidth="4.500" />
        </svg>
        <BadgeText>
          <BadgeName>
            3D<span>溜溜网</span>
          </BadgeName>
          <BadgeUrl>3D66.COM</BadgeUrl>
        </BadgeText>
      </SiteBadge>
    </Frame>
  );
}
